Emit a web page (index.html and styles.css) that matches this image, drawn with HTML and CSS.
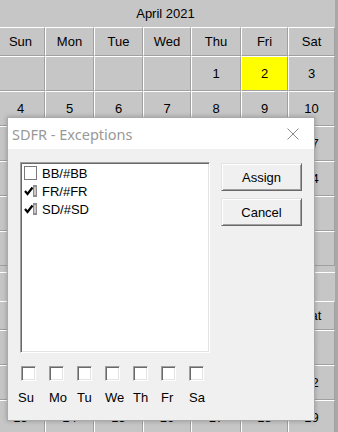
FILE: index.html
```html
<!DOCTYPE html>
<html lang="en">
<head>
  <meta charset="UTF-8" />
  <title>SDFR - Exceptions</title>
  <link rel="stylesheet" href="styles.css">
</head>
<body>

<div class="cal" id="cal">
  <!-- months load here -->
</div>

<div class="dialog">
  <div class="titlebar">
    <span class="title">SDFR - Exceptions</span>
    <svg class="close" width="12" height="12" viewBox="0 0 12 12">
      <path d="M0.5 0.5 L11.5 11.5 M11.5 0.5 L0.5 11.5" stroke="#8a8a8a" stroke-width="1" fill="none"/>
    </svg>
  </div>
  <div class="dlg-body">
    <div class="top">
      <div class="listbox">
        <div class="item"><span class="chk"></span>BB/#BB</div>
        <div class="item">
          <svg class="chk-on" width="13" height="14" viewBox="0 0 13 14">
            <rect x="9" y="1" width="4" height="12" fill="#8c8c8c"/>
            <rect x="10" y="3" width="2" height="8" fill="#c8c8c8"/>
            <path d="M1 7 L3.5 10 L8.5 3.5" stroke="#000" stroke-width="2.2" fill="none"/>
          </svg>FR/#FR
        </div>
        <div class="item">
          <svg class="chk-on" width="13" height="14" viewBox="0 0 13 14">
            <rect x="9" y="1" width="4" height="12" fill="#8c8c8c"/>
            <rect x="10" y="3" width="2" height="8" fill="#c8c8c8"/>
            <path d="M1 7 L3.5 10 L8.5 3.5" stroke="#000" stroke-width="2.2" fill="none"/>
          </svg>SD/#SD
        </div>
      </div>
      <div class="buttons">
        <button class="btn">Assign</button>
        <button class="btn">Cancel</button>
      </div>
    </div>
    <div class="days">
      <div class="day"><span class="box"></span><span class="lbl su">Su</span></div>
      <div class="day"><span class="box"></span><span class="lbl">Mo</span></div>
      <div class="day"><span class="box"></span><span class="lbl">Tu</span></div>
      <div class="day"><span class="box"></span><span class="lbl">We</span></div>
      <div class="day"><span class="box"></span><span class="lbl">Th</span></div>
      <div class="day"><span class="box"></span><span class="lbl">Fr</span></div>
      <div class="day"><span class="box"></span><span class="lbl">Sa</span></div>
    </div>
  </div>
</div>

<script>
  const months = [
    { title: "April 2021", first: 4, days: 30, cls: "" },
    { title: "June 2021", first: 2, days: 30, cls: "next" }
  ];
  const names = ["Sun", "Mon", "Tue", "Wed", "Thu", "Fri", "Sat"];

  function loadMonths() {
    const cal = document.getElementById('cal');
    months.forEach((m, mi) => {
      const month = document.createElement('div');
      month.className = 'month ' + m.cls;
      const title = document.createElement('div');
      title.className = 'month-title';
      title.textContent = m.title;
      month.appendChild(title);
      const grid = document.createElement('div');
      grid.className = 'grid';
      names.forEach((n) => {
        const c = document.createElement('div');
        c.className = 'cell';
        c.textContent = n;
        grid.appendChild(c);
      });
      for (let i = 0; i < 42; i++) {
        const d = i - m.first + 1;
        const c = document.createElement('div');
        c.className = 'cell';
        if (d >= 1 && d <= m.days) c.textContent = d;
        if (mi === 0 && d === 2) c.classList.add('today');
        grid.appendChild(c);
      }
      month.appendChild(grid);
      cal.appendChild(month);
    });
  }

  loadMonths();
</script>

</body>
</html>
```

FILE: styles.css
```css
body {
  margin: 0;
  width: 338px;
  height: 432px;
  overflow: hidden;
  position: relative;
  background: #a9a9a9;
  font-family: "Liberation Sans", Arial, sans-serif;
  font-size: 13px;
  color: #000;
}
.cal {
  margin-left: -4px;
  width: 339px;
  background: #c6c6c6;
}
.month-title {
  height: 27px;
  line-height: 27px;
  text-align: center;
}
.month.next {
  margin-top: 6px;
}
.month.next .month-title {
  height: 29px;
  border-top: 1px solid #fff;
  box-sizing: border-box;
}
.grid {
  display: grid;
  grid-template-columns: 49px 49px 49px 48px 50px 47px 47px;
  grid-template-rows: 29px repeat(6, 35px);
}
.cell {
  box-sizing: border-box;
  border-top: 1px solid #fff;
  border-left: 1px solid #fff;
  border-right: 1px solid #a0a0a0;
  border-bottom: 1px solid #a0a0a0;
  display: flex;
  align-items: center;
  justify-content: center;
}
.cell.today {
  background: #ffff00;
}

/* dialog */
.dialog {
  position: absolute;
  left: 7px;
  top: 117px;
  width: 308px;
  height: 304px;
  box-sizing: border-box;
  border: 1px solid #aaaaaa;
  background: #f0f0f0;
  box-shadow: 0 0 5px rgba(0,0,0,0.25);
}
.titlebar {
  height: 31px;
  background: #fff;
  display: flex;
  align-items: center;
  justify-content: space-between;
  padding: 0 15px 0 4px;
}
.title {
  font-family: "Noto Sans", "Open Sans", sans-serif;
  font-size: 14.5px;
  color: #999;
}
.close {
  margin-top: 1px;
}
.dlg-body {
  padding: 13px 12px 0 12px;
}
.top {
  display: flex;
  gap: 11px;
}
.listbox {
  width: 190px;
  height: 191px;
  box-sizing: border-box;
  background: #fff;
  border-top: 1px solid #a0a0a0;
  border-left: 1px solid #a0a0a0;
  border-bottom: 1px solid #fff;
  border-right: 1px solid #fff;
  box-shadow: inset 1px 1px 0 #696969, inset -1px -1px 0 #e3e3e3;
  padding: 1px 3px;
}
.item {
  height: 18px;
  display: flex;
  align-items: center;
  gap: 5px;
}
.chk {
  width: 13px;
  height: 14px;
  box-sizing: border-box;
  border: 1px solid #7a7a7a;
  background: #fff;
}
.buttons {
  display: flex;
  flex-direction: column;
  gap: 7px;
  margin-top: 1px;
}
.btn {
  width: 81px;
  height: 28px;
  background: #f0f0f0;
  font-family: "Liberation Sans", Arial, sans-serif;
  font-size: 13px;
  color: #000;
  border-top: 1px solid #e3e3e3;
  border-left: 1px solid #e3e3e3;
  border-right: 1px solid #696969;
  border-bottom: 1px solid #696969;
  box-shadow: inset 1px 1px 0 #fff, inset -1px -1px 0 #a0a0a0;
  padding: 0;
}
.days {
  display: grid;
  grid-template-columns: repeat(7, 28px);
  margin-top: 13px;
  margin-left: 1px;
}
.day {
  display: flex;
  flex-direction: column;
  align-items: flex-start;
}
.box {
  width: 15px;
  height: 15px;
  box-sizing: border-box;
  background: #fff;
  border-top: 1px solid #a0a0a0;
  border-left: 1px solid #a0a0a0;
  border-bottom: 1px solid #fff;
  border-right: 1px solid #fff;
  box-shadow: inset 1px 1px 0 #696969, inset -1px -1px 0 #e3e3e3;
}
.lbl {
  margin-top: 9px;
}
.lbl.su {
  margin-left: -3px;
}
```
